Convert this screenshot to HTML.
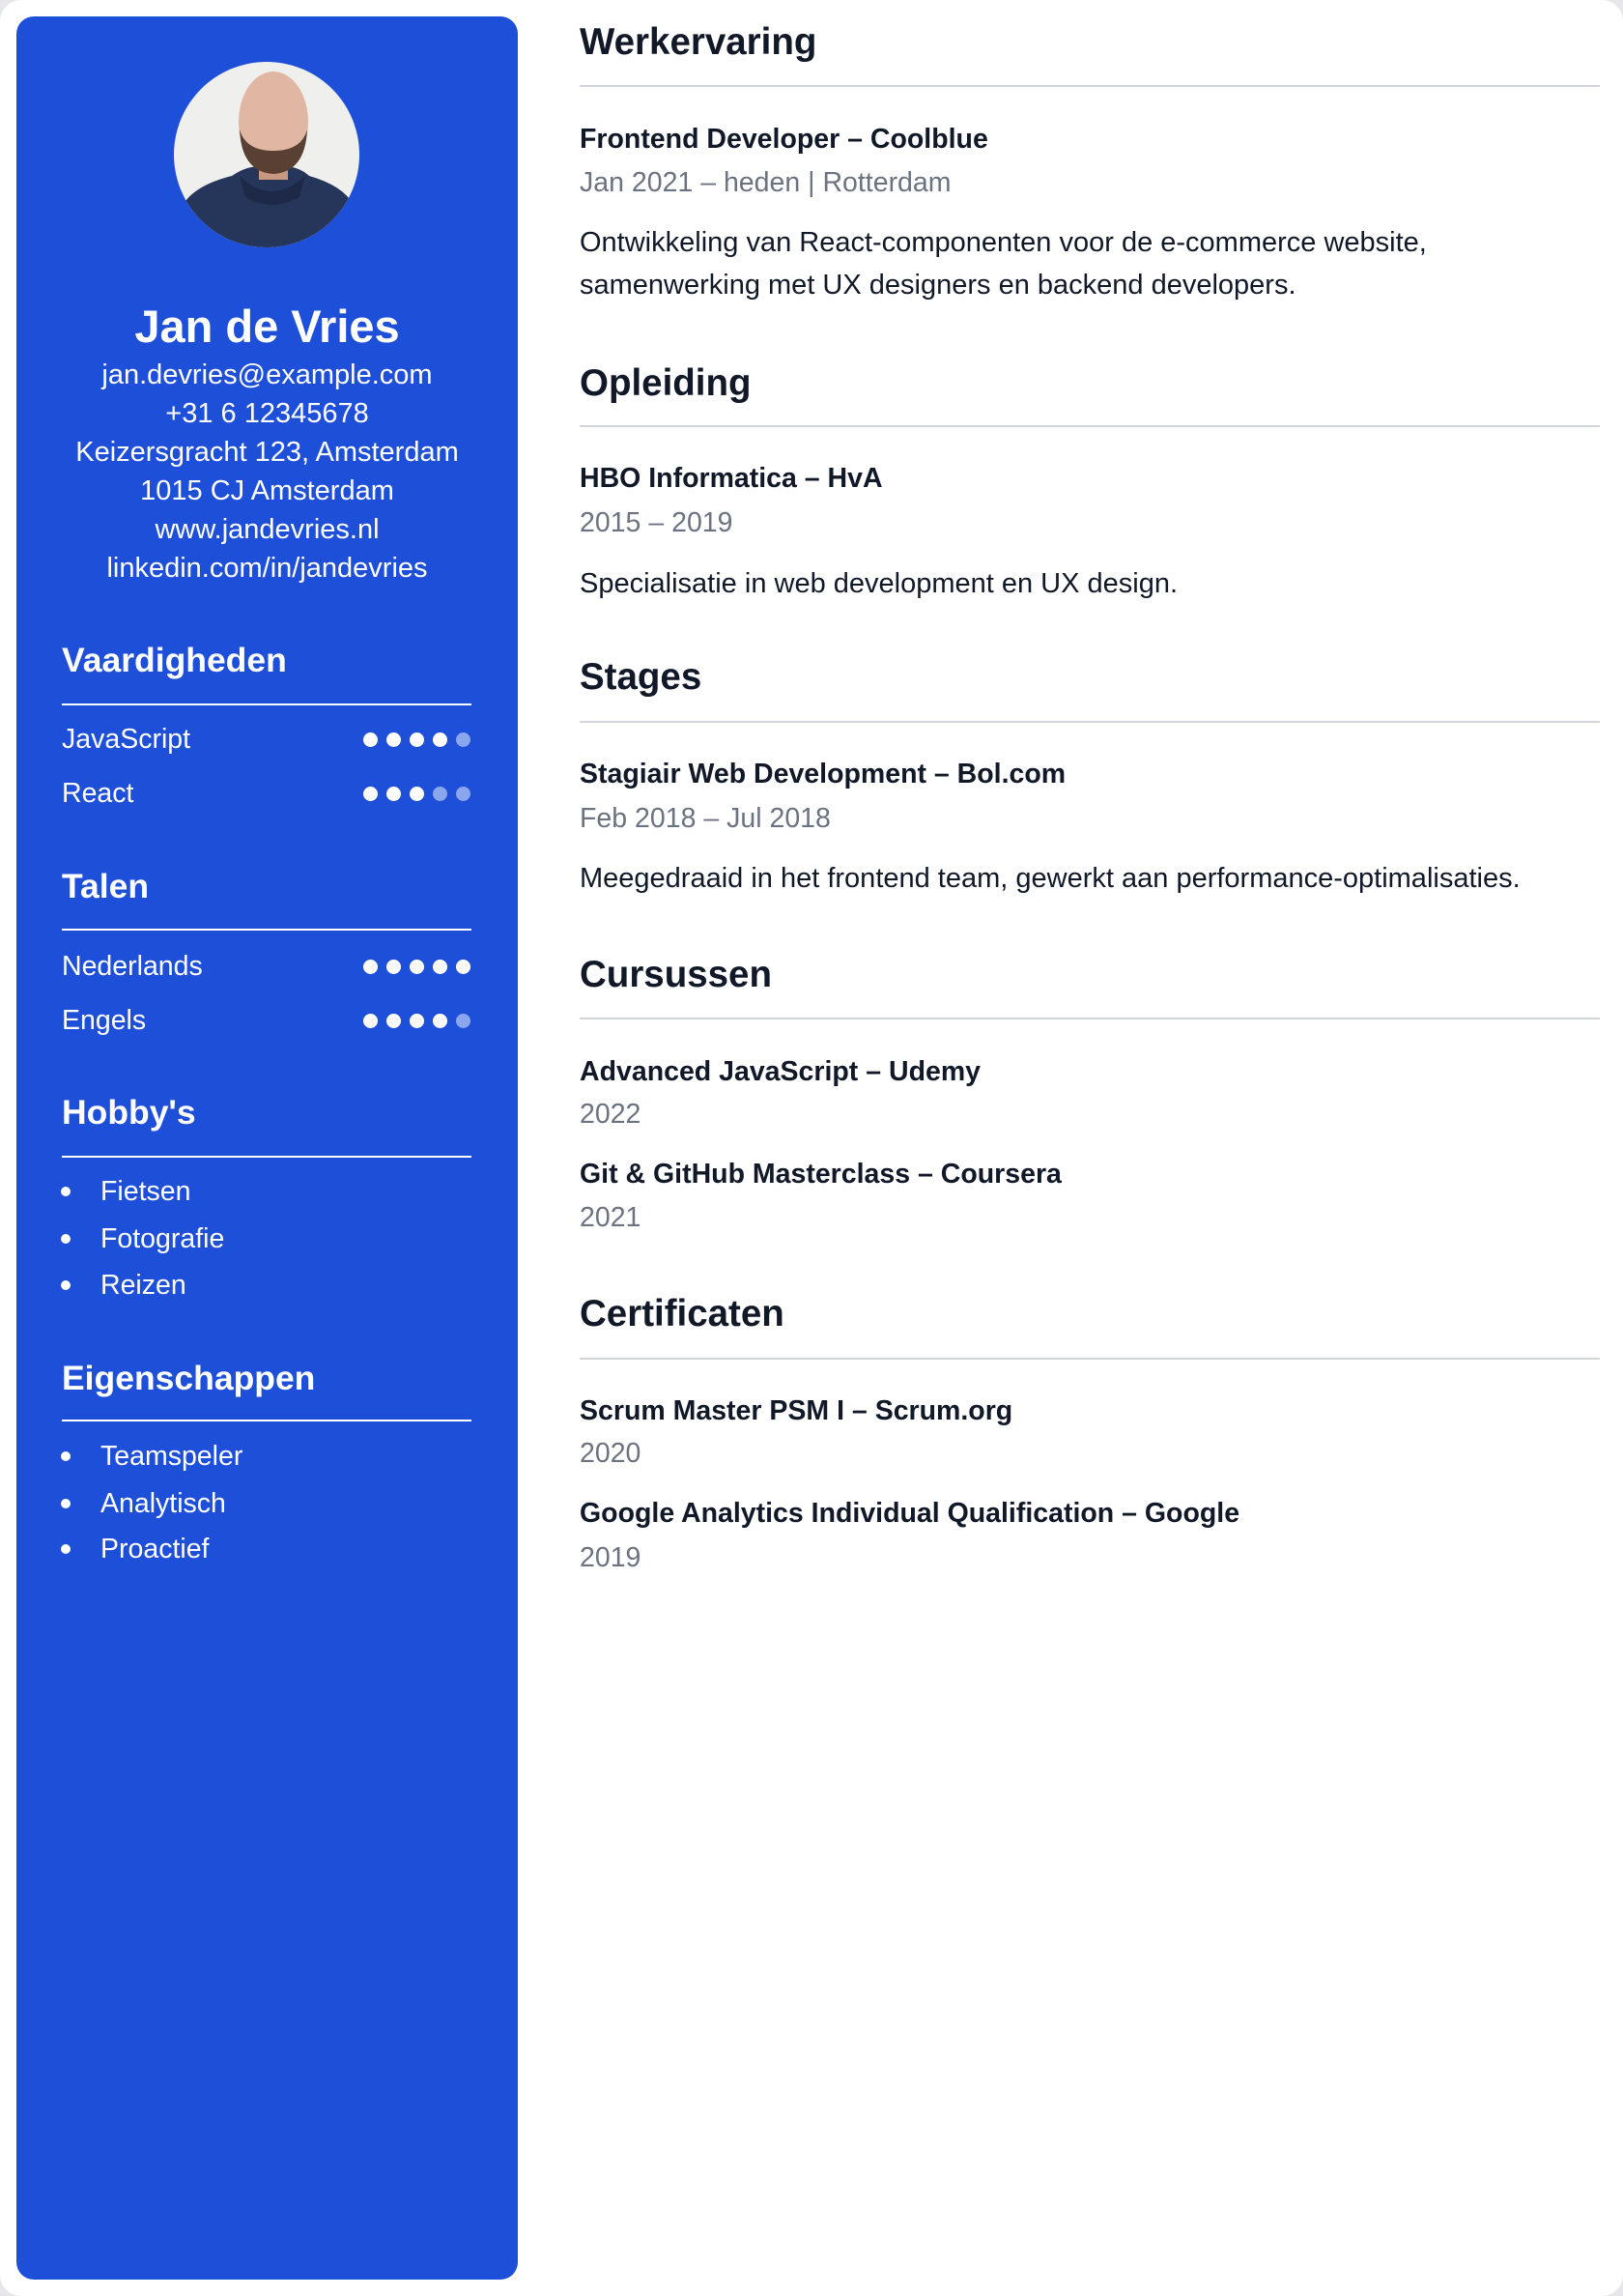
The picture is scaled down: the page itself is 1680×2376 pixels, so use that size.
<!DOCTYPE html>
<html><head><meta charset="utf-8">
<style>
*{margin:0;padding:0;box-sizing:border-box}
html,body{width:1680px;height:2376px;background:#e5e7eb;overflow:hidden}
body{font-family:"Liberation Sans",Arial,sans-serif;position:relative}
.card{position:absolute;left:0;top:0;width:1680px;height:2376px;background:#fff;border-radius:22px}
.side{position:absolute;left:17px;top:17px;width:519px;height:2342px;background:#1e4fd8;border-radius:18px;color:#fff}
.t{position:absolute;white-space:nowrap;height:40px;line-height:40px}
.c{left:0;width:519px;text-align:center}
.sh{font-weight:bold;font-size:35.5px;left:47px}
.hr{position:absolute;left:47px;width:424px;height:2px;background:#fff}
.it{font-size:28.5px;left:47px}
.dots{position:absolute;left:359px;height:16px}
.dots i{position:absolute;top:0;width:15px;height:15px;border-radius:50%;background:#fff}
.dots i.d{background:#8aa6ec}
.bul{position:absolute;left:46px;width:10px;height:10px;border-radius:50%;background:#fff}
.m{color:#111827}
.mh{font-weight:bold;font-size:38.5px;left:600px;height:50px;line-height:50px}
.mhr{position:absolute;left:600px;width:1056px;height:2px;background:#d1d5db}
.mt{font-weight:bold;font-size:28.5px;left:600px}
.md{font-size:28.5px;left:600px;color:#6b7280}
.mp{font-size:29px;left:600px;color:#111827}
</style></head><body>
<div class="card"></div>
<div class="side">
  <svg style="position:absolute;left:163px;top:47px" width="192" height="192" viewBox="0 0 192 192">
    <defs><clipPath id="cc"><circle cx="96" cy="96" r="96"/></clipPath></defs>
    <g clip-path="url(#cc)">
      <rect width="192" height="192" fill="#efefed"/>
      <path d="M0 192 L8 150 Q20 128 60 118 Q80 104 100 110 Q125 104 140 118 Q175 128 186 148 L192 192Z" fill="#26355a"/>
      <path d="M68 118 Q100 150 136 118 L130 140 Q100 156 74 140Z" fill="#1d2947"/>
      <rect x="88" y="100" width="30" height="22" fill="#c99880"/>
      <ellipse cx="103" cy="62" rx="36" ry="52" fill="#e0b7a3"/>
      <path d="M68 70 Q70 114 103 116 Q136 114 138 70 Q132 92 103 92 Q74 92 68 70Z" fill="#5a4033"/>
    </g>
  </svg>
  <div class="t c" style="top:298px;height:46px;line-height:46px;font-size:47px;font-weight:bold">Jan de Vries</div>
  <div class="t c" style="top:351px;font-size:29px">jan.devries@example.com</div>
  <div class="t c" style="top:391px;font-size:29px">+31 6 12345678</div>
  <div class="t c" style="top:431px;font-size:29px">Keizersgracht 123, Amsterdam</div>
  <div class="t c" style="top:471px;font-size:29px">1015 CJ Amsterdam</div>
  <div class="t c" style="top:511px;font-size:29px">www.jandevries.nl</div>
  <div class="t c" style="top:551px;font-size:29px">linkedin.com/in/jandevries</div>

  <div class="t sh" style="top:646px">Vaardigheden</div>
  <div class="hr" style="top:711px"></div>
  <div class="t it" style="top:728px">JavaScript</div>
  <div class="dots" style="top:741px"><i style="left:0"></i><i style="left:24px"></i><i style="left:48px"></i><i style="left:72px"></i><i class="d" style="left:96px"></i></div>
  <div class="t it" style="top:784px">React</div>
  <div class="dots" style="top:797px"><i style="left:0"></i><i style="left:24px"></i><i style="left:48px"></i><i class="d" style="left:72px"></i><i class="d" style="left:96px"></i></div>

  <div class="t sh" style="top:880px">Talen</div>
  <div class="hr" style="top:944px"></div>
  <div class="t it" style="top:963px">Nederlands</div>
  <div class="dots" style="top:976px"><i style="left:0"></i><i style="left:24px"></i><i style="left:48px"></i><i style="left:72px"></i><i style="left:96px"></i></div>
  <div class="t it" style="top:1019px">Engels</div>
  <div class="dots" style="top:1032px"><i style="left:0"></i><i style="left:24px"></i><i style="left:48px"></i><i style="left:72px"></i><i class="d" style="left:96px"></i></div>

  <div class="t sh" style="top:1114px">Hobby's</div>
  <div class="hr" style="top:1179px"></div>
  <div class="bul" style="top:1211px"></div><div class="t it" style="top:1196px;left:87px">Fietsen</div>
  <div class="bul" style="top:1260px"></div><div class="t it" style="top:1245px;left:87px">Fotografie</div>
  <div class="bul" style="top:1308px"></div><div class="t it" style="top:1293px;left:87px">Reizen</div>

  <div class="t sh" style="top:1389px">Eigenschappen</div>
  <div class="hr" style="top:1452px"></div>
  <div class="bul" style="top:1485px"></div><div class="t it" style="top:1470px;left:87px">Teamspeler</div>
  <div class="bul" style="top:1534px"></div><div class="t it" style="top:1519px;left:87px">Analytisch</div>
  <div class="bul" style="top:1581px"></div><div class="t it" style="top:1566px;left:87px">Proactief</div>
</div>

<div class="t m mh" style="top:19px">Werkervaring</div>
<div class="mhr" style="top:88px"></div>
<div class="t m mt" style="top:124px">Frontend Developer – Coolblue</div>
<div class="t md" style="top:169px">Jan 2021 – heden | Rotterdam</div>
<div class="t mp" style="top:231px">Ontwikkeling van React-componenten voor de e-commerce website,</div>
<div class="t mp" style="top:275px">samenwerking met UX designers en backend developers.</div>

<div class="t m mh" style="top:372px">Opleiding</div>
<div class="mhr" style="top:440px"></div>
<div class="t m mt" style="top:475px">HBO Informatica – HvA</div>
<div class="t md" style="top:521px">2015 – 2019</div>
<div class="t mp" style="top:584px">Specialisatie in web development en UX design.</div>

<div class="t m mh" style="top:676px">Stages</div>
<div class="mhr" style="top:746px"></div>
<div class="t m mt" style="top:781px">Stagiair Web Development – Bol.com</div>
<div class="t md" style="top:827px">Feb 2018 – Jul 2018</div>
<div class="t mp" style="top:889px">Meegedraaid in het frontend team, gewerkt aan performance-optimalisaties.</div>

<div class="t m mh" style="top:984px">Cursussen</div>
<div class="mhr" style="top:1053px"></div>
<div class="t m mt" style="top:1089px">Advanced JavaScript – Udemy</div>
<div class="t md" style="top:1133px">2022</div>
<div class="t m mt" style="top:1195px">Git &amp; GitHub Masterclass – Coursera</div>
<div class="t md" style="top:1240px">2021</div>

<div class="t m mh" style="top:1335px">Certificaten</div>
<div class="mhr" style="top:1405px"></div>
<div class="t m mt" style="top:1440px">Scrum Master PSM I – Scrum.org</div>
<div class="t md" style="top:1484px">2020</div>
<div class="t m mt" style="top:1546px">Google Analytics Individual Qualification – Google</div>
<div class="t md" style="top:1592px">2019</div>
</body></html>
